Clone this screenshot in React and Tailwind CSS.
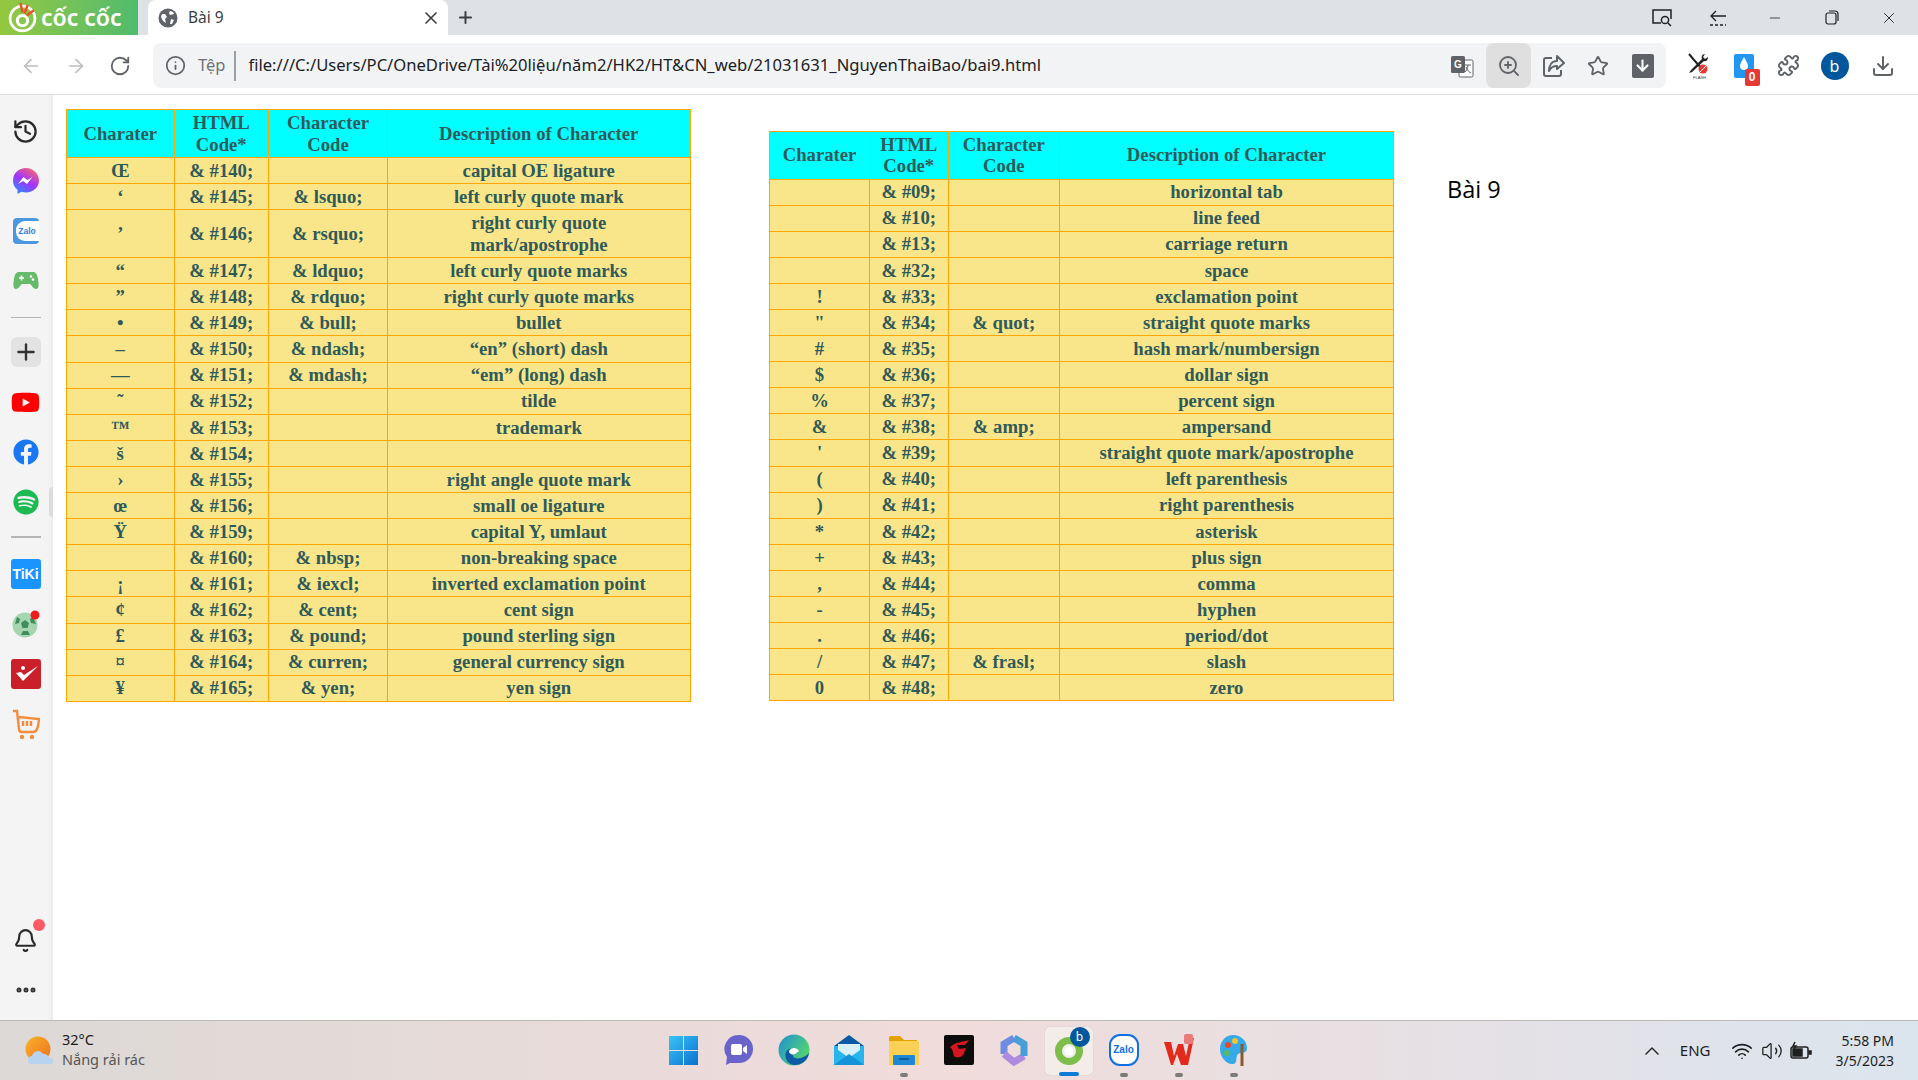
import React from "react";
import {
  ArrowLeft,
  ArrowRight,
  RotateCw,
  Info,
  X,
  Plus,
  ZoomIn,
  Star,
  ArrowDown,
  Download,
  Puzzle,
  History,
  Bell,
  Ellipsis,
  ChevronUp,
  Wifi,
  Volume2,
  Minus,
} from "lucide-react";
import { FaYoutube, FaFacebook, FaSpotify } from "react-icons/fa";

const leftRows = [
  ["Œ", "& #140;", "", "capital OE ligature"],
  ["‘", "& #145;", "& lsquo;", "left curly quote mark"],
  ["’", "& #146;", "& rsquo;", "right curly quote mark/apostrophe", true],
  ["“", "& #147;", "& ldquo;", "left curly quote marks"],
  ["”", "& #148;", "& rdquo;", "right curly quote marks"],
  ["•", "& #149;", "& bull;", "bullet"],
  ["–", "& #150;", "& ndash;", "“en” (short) dash"],
  ["—", "& #151;", "& mdash;", "“em” (long) dash"],
  ["˜", "& #152;", "", "tilde"],
  ["™", "& #153;", "", "trademark"],
  ["š", "& #154;", "", ""],
  ["›", "& #155;", "", "right angle quote mark"],
  ["œ", "& #156;", "", "small oe ligature"],
  ["Ÿ", "& #159;", "", "capital Y, umlaut"],
  ["", "& #160;", "& nbsp;", "non-breaking space"],
  ["¡", "& #161;", "& iexcl;", "inverted exclamation point"],
  ["¢", "& #162;", "& cent;", "cent sign"],
  ["£", "& #163;", "& pound;", "pound sterling sign"],
  ["¤", "& #164;", "& curren;", "general currency sign"],
  ["¥", "& #165;", "& yen;", "yen sign"],
];

const rightRows = [
  ["", "& #09;", "", "horizontal tab"],
  ["", "& #10;", "", "line feed"],
  ["", "& #13;", "", "carriage return"],
  ["", "& #32;", "", "space"],
  ["!", "& #33;", "", "exclamation point"],
  ['"', "& #34;", "& quot;", "straight quote marks"],
  ["#", "& #35;", "", "hash mark/numbersign"],
  ["$", "& #36;", "", "dollar sign"],
  ["%", "& #37;", "", "percent sign"],
  ["&", "& #38;", "& amp;", "ampersand"],
  ["'", "& #39;", "", "straight quote mark/apostrophe"],
  ["(", "& #40;", "", "left parenthesis"],
  [")", "& #41;", "", "right parenthesis"],
  ["*", "& #42;", "", "asterisk"],
  ["+", "& #43;", "", "plus sign"],
  [",", "& #44;", "", "comma"],
  ["-", "& #45;", "", "hyphen"],
  [".", "& #46;", "", "period/dot"],
  ["/", "& #47;", "& frasl;", "slash"],
  ["0", "& #48;", "", "zero"],
];

const CharTable = ({ rows, widths, className }) => {
  const cell = "border border-[#ffa500] p-0 text-center align-middle";
  return (
    <table
      className={`table-fixed border-collapse font-['Liberation_Serif',serif] text-[18.7px] font-bold leading-[21.5px] text-[#2f5a5a] ${className}`}
    >
      <colgroup>
        {widths.map((w) => (
          <col key={w} className={w} />
        ))}
      </colgroup>
      <thead>
        <tr className="h-[48px] bg-[#00ffff]">
          <th className={cell}>Charater</th>
          <th className={cell}>HTML Code*</th>
          <th className={cell}>Character Code</th>
          <th className={cell}>Description of Character</th>
        </tr>
      </thead>
      <tbody className="bg-[#f9e68a]">
        {rows.map((r) => (
          <tr key={r[1]} className={r[4] ? "h-[48px]" : "h-[26.1px]"}>
            <td className={cell}>{r[0]}</td>
            <td className={cell}>{r[1]}</td>
            <td className={cell}>{r[2]}</td>
            <td className={`${cell} px-6`}>{r[3]}</td>
          </tr>
        ))}
      </tbody>
    </table>
  );
};

const CocCocMark = ({ size = 30, stroke = "#fff", hole = "none" }) => (
  <svg width={size} height={size} viewBox="0 0 30 30">
    <circle cx="15" cy="16" r="12" fill="none" stroke={stroke} strokeWidth="2.6" />
    <circle cx="15" cy="18" r="5" fill={hole} stroke={stroke} strokeWidth="3" />
    <path d="M13 1l2 9M20 3l-3 8M26 8l-7 5" stroke="#f04e23" strokeWidth="2.4" />
  </svg>
);

const ToolSlot = ({ children, className = "" }) => (
  <div className={`flex h-[45px] w-[45px] shrink-0 items-center justify-center ${className}`}>
    {children}
  </div>
);

const TabBar = () => (
  <div className="flex h-[35px] shrink-0 items-stretch bg-[#dee1e6]">
    <div className="flex w-[138px] items-center gap-[3px] bg-gradient-to-r from-[#93c83e] to-[#4fbb6c] pl-[7px] font-['Noto_Sans',sans-serif] text-[23px] font-semibold text-white">
      <CocCocMark size={31} />
      <span className="whitespace-nowrap leading-none">cốc cốc</span>
    </div>
    <div className="ml-[10px] flex w-[300px] items-center rounded-t-lg bg-white pl-[10px] pr-[7px]">
      <svg width="20" height="20" viewBox="0 0 20 20">
        <circle cx="10" cy="10" r="9.5" fill="#5f6368" />
        <path d="M4 6l3 0 2 3-2 2 1 4-3-2-2-4zM12 3l3 1 1 2-4 1-1-2zM13 11l3 1-2 4-2 0z" fill="#fff" />
      </svg>
      <span className="ml-[10px] flex-1 font-['Noto_Sans',sans-serif] text-[15.5px] text-[#3c4043]">Bài 9</span>
      <X size={20} strokeWidth={2} className="text-[#3c4043]" />
    </div>
    <div className="flex w-[34px] items-center justify-center">
      <Plus size={19} strokeWidth={2.5} className="text-[#3c4043]" />
    </div>
    <div className="flex-1" />
    <div className="flex text-[#202124]">
      <div className="flex w-[57px] items-center justify-center">
        <svg width="22" height="20" viewBox="0 0 22 20" fill="none" stroke="currentColor" strokeWidth="1.5">
          <path d="M10 15H2V2h18v9" />
          <circle cx="14" cy="12" r="3.6" />
          <path d="M17 15l3 3" />
        </svg>
      </div>
      <div className="-ml-[1px] flex w-[57px] items-center justify-center">
        <svg width="20" height="20" viewBox="0 0 20 20" fill="none" stroke="currentColor" strokeWidth="1.3">
          <path d="M8 3L3 8l5 5M3 8h15" />
          <path d="M2 17h16" strokeDasharray="3 2" />
        </svg>
      </div>
      <div className="flex w-[57px] items-center justify-center">
        <Minus size={16} strokeWidth={1.2} />
      </div>
      <div className="flex w-[57px] items-center justify-center">
        <svg width="14" height="15" viewBox="0 0 14 15" fill="none" stroke="currentColor" strokeWidth="1.2">
          <rect x="1" y="3" width="10" height="11" rx="2" />
          <path d="M4 1h6a3 3 0 0 1 3 3v7" />
        </svg>
      </div>
      <div className="flex w-[58px] items-center justify-center">
        <X size={18} strokeWidth={1.2} />
      </div>
    </div>
  </div>
);

const Toolbar = () => (
  <div className="flex h-[60px] shrink-0 items-start border-b border-[#dfdfdf] bg-white pl-[8px] pt-[8px]">
    <ToolSlot><ArrowLeft size={22} strokeWidth={1.8} className="text-[#bdbdbd]" /></ToolSlot>
    <ToolSlot><ArrowRight size={22} strokeWidth={1.8} className="text-[#bdbdbd]" /></ToolSlot>
    <ToolSlot className="-ml-[1px]"><RotateCw size={22} strokeWidth={2} className="text-[#5f6368]" /></ToolSlot>
    <div className="ml-[11px] flex h-[45px] w-[1513px] items-center rounded-lg bg-[#f1f3f4] pl-[12px]">
      <Info size={21} strokeWidth={2} className="text-[#5f6368]" />
      <span className="ml-[12px] font-['Noto_Sans',sans-serif] text-[16.5px] text-[#6f7276]">Tệp</span>
      <span className="ml-[9px] h-[30px] w-[2px] bg-[#9aa0a6]" />
      <span className="ml-[12px] flex-1 whitespace-nowrap font-['Noto_Sans',sans-serif] text-[16.6px] text-[#202124]">
        file:///C:/Users/PC/OneDrive/Tài%20liệu/năm2/HK2/HT&amp;CN_web/21031631_NguyenThaiBao/bai9.html
      </span>
      <ToolSlot className="-translate-x-[2px]">
        <svg width="24" height="24" viewBox="0 0 24 24">
          <rect x="9" y="6" width="14" height="17" rx="1.5" fill="#fff" stroke="#5f6368" />
          <rect x="1" y="2" width="14" height="17" rx="1.5" fill="#5f6368" />
          <text x="4" y="14" fontSize="10" fontWeight="700" fill="#fff" fontFamily="Liberation Sans">G</text>
          <path d="M15 11h6M18 11c0 4-2 6-3 7M16 13c1 3 3 5 5 6" stroke="#5f6368" fill="none" />
        </svg>
      </ToolSlot>
      <ToolSlot className="rounded-lg bg-[#dfdfdf]"><ZoomIn size={24} strokeWidth={1.8} className="text-[#5f6368]" /></ToolSlot>
      <ToolSlot>
        <svg width="24" height="24" viewBox="0 0 24 24" fill="none" stroke="#5f6368" strokeWidth="2">
          <path d="M10 4H4a2 2 0 0 0-2 2v14a2 2 0 0 0 2 2h13a2 2 0 0 0 2-2v-4" />
          <path d="M15 2l7 7-7 6v-3c-4 0-6 1-8 5 0-6 3-10 8-10z" strokeLinejoin="round" />
        </svg>
      </ToolSlot>
      <ToolSlot className="-translate-x-[1px]"><Star size={22} strokeWidth={2} className="text-[#5f6368]" /></ToolSlot>
      <ToolSlot className="-translate-x-[1px]">
        <span className="flex h-[24px] w-[22px] items-center justify-center rounded-[2px] bg-[#5f6368]">
          <ArrowDown size={17} strokeWidth={3} className="text-white" />
        </span>
      </ToolSlot>
    </div>
    <ToolSlot className="ml-[9px]">
      <svg width="24" height="28" viewBox="0 0 24 28" fill="none">
        <path d="M3 2l5 6M8 8l9 10" stroke="#222" strokeWidth="2" />
        <path d="M19 2c-3 0-4 3-3 5L5 18l-2 3 3-1L18 9c3 1 4-2 4-4l-3 2-2-2z" fill="#222" />
        <circle cx="17" cy="17" r="4.5" fill="#e53935" />
        <path d="M14 20l6-6" stroke="#fff" />
        <text x="7" y="27" fontSize="4" fill="#333" fontFamily="Liberation Sans">FLASH</text>
      </svg>
    </ToolSlot>
    <ToolSlot className="translate-x-[1px]">
      <span className="relative flex h-[24px] w-[20px] items-start justify-center rounded-[2px] bg-[#2196f3]">
        <svg width="10" height="14" viewBox="0 0 10 14" className="mt-[3px]">
          <path d="M5 0c2 4 4 6 4 9a4 4 0 0 1-8 0c0-3 2-5 4-9z" fill="#fff" />
        </svg>
        <span className="absolute left-[11px] top-[15px] flex h-[17px] w-[15px] items-center justify-center rounded-[2px] bg-[#e53935] font-['Liberation_Sans',sans-serif] text-[12px] font-bold text-white">
          0
        </span>
      </span>
    </ToolSlot>
    <ToolSlot className="translate-x-[1px]"><Puzzle size={23} strokeWidth={2} className="text-[#5f6368]" /></ToolSlot>
    <ToolSlot className="ml-[2px]">
      <span className="flex h-[28px] w-[28px] items-center justify-center rounded-full bg-[#01579b] font-['Noto_Sans',sans-serif] text-[16px] text-white">
        b
      </span>
    </ToolSlot>
    <ToolSlot className="ml-[3px]"><Download size={24} strokeWidth={2} className="text-[#5f6368]" /></ToolSlot>
  </div>
);

const SideSlot = ({ children, className = "" }) => (
  <div className={`flex h-[50px] w-full items-center justify-center ${className}`}>{children}</div>
);

const Sidebar = () => (
  <aside className="relative flex w-[53px] shrink-0 flex-col items-center bg-[#f4f4f4] pr-[2px] pt-[11px] shadow-[inset_-4px_0_4px_-3px_#e6e6e6]">
    <SideSlot><History size={27} strokeWidth={2} className="text-[#2b2b2b]" /></SideSlot>
    <SideSlot>
      <svg width="26" height="26" viewBox="0 0 26 26">
        <defs>
          <linearGradient id="msgr" x1="0.2" y1="1" x2="0.8" y2="0">
            <stop offset="0" stopColor="#2f8cff" />
            <stop offset="0.5" stopColor="#a033ff" />
            <stop offset="1" stopColor="#ff6968" />
          </linearGradient>
        </defs>
        <path d="M13 0C6 0 0 5 0 12.500c0 4 1.600 7 4.500 9.200V26l4-2.200c1.400.4 3 .6 4.500.6 7 0 13-5 13-11.900S20 0 13 0z" fill="url(#msgr)" />
        <path d="M5 16l5.500-7 4 3 5-3-5.500 7-4-3z" fill="#fff" />
      </svg>
    </SideSlot>
    <SideSlot>
      <span className="flex h-[26px] w-[26px] items-center justify-end rounded-[4px] bg-[#4a98e0]">
        <span className="flex h-[20px] w-[23px] items-center justify-center rounded-l-[9px] bg-white font-['Liberation_Sans',sans-serif] text-[8.5px] font-bold text-[#2f7fd8]">
          Zalo
        </span>
      </span>
    </SideSlot>
    <SideSlot>
      <svg width="26" height="18" viewBox="0 0 26 18">
        <path d="M6 0h14c3 0 4 2 5 7 1 6 1 10-2 10-3 0-4-4-6-5H9c-2 1-3 5-6 5-3 0-3-4-2-10C2 2 3 0 6 0z" fill="#66bb6a" />
        <path d="M6 6h5M8.500 3.500v5" stroke="#fff" strokeWidth="1.500" />
        <circle cx="18" cy="4.500" r="1.300" fill="#fff" />
        <circle cx="20" cy="7.500" r="1.300" fill="#fff" />
      </svg>
    </SideSlot>
    <div className="my-[11px] h-px w-[30px] bg-[#b5b5b5]" />
    <SideSlot className="-mt-[2px]">
      <span className="flex h-[30px] w-[30px] items-center justify-center rounded-md bg-[#e3e3e3]">
        <Plus size={26} strokeWidth={2.2} className="text-[#333]" />
      </span>
    </SideSlot>
    <SideSlot><FaYoutube size={29} className="text-[#f00]" /></SideSlot>
    <SideSlot><FaFacebook size={26} className="text-[#1877f2]" /></SideSlot>
    <SideSlot><FaSpotify size={26} className="text-[#1db954]" /></SideSlot>
    <div className="my-[9px] h-[2px] w-[30px] bg-[#b5b5b5]" />
    <SideSlot className="mt-[2px]">
      <span className="flex h-[30px] w-[30px] items-center justify-center rounded-[3px] bg-[#1a94ff] font-['Liberation_Sans',sans-serif] text-[14px] font-bold text-white">
        TiKi
      </span>
    </SideSlot>
    <SideSlot>
      <svg width="28" height="28" viewBox="0 0 28 28">
        <circle cx="13" cy="15" r="12.500" fill="#a5d6b0" />
        <path d="M13 10l4 3-1.500 5h-5L9 13z" fill="#3f8f5a" />
        <path d="M5 7l3 2-1 4-4 1zM21 7l-3 2 1 4 5 1zM9 25l2-4h5l2 4z" fill="#3f8f5a" />
        <circle cx="23" cy="5" r="4.500" fill="#f01c1c" />
      </svg>
    </SideSlot>
    <SideSlot>
      <span className="flex h-[30px] w-[30px] items-center justify-center rounded-[3px] bg-[#c9202a]">
        <svg width="26" height="22" viewBox="0 0 26 22" fill="none">
          <path d="M3 10l7 8L25 3 11 12 8 9z" fill="#fff" />
          <circle cx="10" cy="5" r="2" fill="#fff" />
        </svg>
      </span>
    </SideSlot>
    <SideSlot>
      <svg width="28" height="30" viewBox="0 0 28 30" fill="none" stroke="#f58b3c" strokeWidth="2.4">
        <path d="M1 2h4l2 18c0 2 1 3 3 3h11c3 0 5-2 6-13L7 8" />
        <path d="M11 17v-5M15 17v-5M19 17v-5" />
        <circle cx="10" cy="28" r="1" fill="#f58b3c" />
        <circle cx="20" cy="28" r="1" fill="#f58b3c" />
      </svg>
    </SideSlot>
    <div className="flex-1" />
    <SideSlot className="relative">
      <Bell size={25} strokeWidth={2} className="text-[#2b2b2b]" />
      <span className="absolute left-[33px] top-[4px] h-[12px] w-[12px] rounded-full bg-[#ff5a65]" />
    </SideSlot>
    <SideSlot className="mb-[5px]"><Ellipsis size={24} strokeWidth={3} className="text-[#333]" /></SideSlot>
    <span className="absolute left-[49px] top-[392px] h-[30px] w-[4px] rounded-l-sm bg-[#dcdcdc]" />
  </aside>
);

const TaskSlot = ({ children, dot, active }) => (
  <div className="relative flex h-[60px] w-[55px] shrink-0 items-center justify-center">
    {active && <span className="absolute left-[4px] top-[6px] h-[48px] w-[48px] rounded-[5px] bg-[#f3ece8] shadow-[0_0_1px_#bbb]" />}
    <span className="relative flex -translate-y-[1px] items-center justify-center">{children}</span>
    {dot && <span className="absolute left-[24px] top-[52px] h-[4px] w-[8px] rounded-full bg-[#7b7b7b]" />}
    {active && <span className="absolute left-[18px] top-[51px] h-[4px] w-[20px] rounded-full bg-[#0a7cd6]" />}
  </div>
);

const Taskbar = () => (
  <footer className="flex h-[60px] shrink-0 items-center border-t border-[#bdb9b6] bg-gradient-to-r from-[#dcd9d6] via-[#f0dcdb] to-[#dbe5ee]">
    <div className="flex w-[656px] shrink-0 items-center pl-[25px] font-['Noto_Sans',sans-serif]">
      <svg width="30" height="30" viewBox="0 0 30 30">
        <defs>
          <linearGradient id="sun" x1="0" y1="0" x2="1" y2="1">
            <stop offset="0" stopColor="#f8b42a" />
            <stop offset="1" stopColor="#ee6f1f" />
          </linearGradient>
        </defs>
        <circle cx="13" cy="13" r="12.500" fill="url(#sun)" />
        <path d="M7 28a4 4 0 0 1 0-8 6 6 0 0 1 11-2 5 5 0 0 1 6 4 3 3 0 0 1 2 6z" fill="#b7d3f0" />
      </svg>
      <div className="ml-[7px] -mt-[3px] flex flex-col text-[14.5px] leading-[20px]">
        <span className="text-[#1c1c1c]">32°C</span>
        <span className="text-[#555]">Nắng rải rác</span>
      </div>
    </div>
    <TaskSlot>
      <svg width="30" height="30" viewBox="0 0 30 30">
        <defs>
          <linearGradient id="win" x1="0" y1="0" x2="1" y2="1">
            <stop offset="0" stopColor="#39c4f7" />
            <stop offset="1" stopColor="#0a6fd0" />
          </linearGradient>
        </defs>
        <path d="M0 1h14v14H0zM15 1h14v14H15zM0 16h14v14H0zM15 16h14v14H15z" fill="url(#win)" />
      </svg>
    </TaskSlot>
    <TaskSlot>
      <svg width="30" height="32" viewBox="0 0 30 32">
        <path d="M15 1a14 14 0 0 1 0 28H6l-4 2 1-8A14 14 0 0 1 15 1z" fill="#6a63c9" />
        <rect x="7" y="10" width="11" height="11" rx="2" fill="#fff" />
        <path d="M19 14l4-3v9l-4-3z" fill="#fff" />
      </svg>
    </TaskSlot>
    <TaskSlot>
      <svg width="32" height="32" viewBox="0 0 32 32">
        <defs>
          <linearGradient id="edge" x1="0" y1="0" x2="1" y2="0.6">
            <stop offset="0" stopColor="#1f8fd8" />
            <stop offset="1" stopColor="#55d66b" />
          </linearGradient>
        </defs>
        <circle cx="16" cy="16" r="15.500" fill="url(#edge)" />
        <path d="M31 19c-1 8-8 12-14 12C9 31 6 23 8 18c2-4 9-5 11-1-3 0-5 2-4 5 1 4 11 3 16-3z" fill="#0c59a4" />
        <path d="M21 17c-2-4-8-4-10 0 0 3 3 4 6 3z" fill="#fff" />
      </svg>
    </TaskSlot>
    <TaskSlot>
      <svg width="32" height="32" viewBox="0 0 32 32">
        <path d="M1 12L16 1l15 11v19H1z" fill="#0c59a4" />
        <path d="M1 12h30v19H1z" fill="#28b4ee" />
        <path d="M5 10h22v6L16 24 5 16z" fill="#d9f0fb" />
        <path d="M1 31l15-11 15 11z" fill="#1593d8" />
      </svg>
    </TaskSlot>
    <TaskSlot dot>
      <svg width="32" height="30" viewBox="0 0 32 30">
        <path d="M1 3a2 2 0 0 1 2-2h9l4 4h13v6H1z" fill="#e2a300" />
        <path d="M1 6h30v24H1z" fill="#fbd155" />
        <rect x="5" y="20" width="22" height="10" rx="1" fill="#1e88d4" />
        <path d="M11 24h10" stroke="#0b4f8c" strokeWidth="1.500" />
      </svg>
    </TaskSlot>
    <TaskSlot>
      <svg width="30" height="30" viewBox="0 0 30 30">
        <rect width="30" height="30" rx="2" fill="#0d0d0d" />
        <path d="M6 12c6-5 12-5 19-7l-4 5h-8l2 4 7-1-2 5c-1 4-7 6-10 3l-2-7z" fill="#d5161e" />
      </svg>
    </TaskSlot>
    <TaskSlot>
      <svg width="28" height="32" viewBox="0 0 28 32" fill="none" strokeWidth="7">
        <path d="M14 4L4 10v10" stroke="#6d8ce0" />
        <path d="M4 20l10 8 10-6" stroke="#ae8be0" />
        <path d="M24 22V10L14 4" stroke="#4a9ed8" />
      </svg>
    </TaskSlot>
    <TaskSlot active>
      <svg width="30" height="30" viewBox="0 0 30 30" fill="none">
        <circle cx="15" cy="16" r="10.500" stroke="#7dbe4b" strokeWidth="7" />
        <circle cx="15" cy="16" r="4.500" fill="#fff" />
      </svg>
      <span className="absolute -right-[6px] -top-[8px] flex h-[20px] w-[20px] items-center justify-center rounded-full bg-[#01579b] font-['Noto_Sans',sans-serif] text-[12px] text-white">
        b
      </span>
    </TaskSlot>
    <TaskSlot dot>
      <span className="flex h-[32px] w-[30px] items-center justify-center rounded-[11px] border-2 border-[#0f6fe6] bg-white font-['Liberation_Sans',sans-serif] text-[10px] font-bold text-[#0f6fe6]">
        Zalo
      </span>
    </TaskSlot>
    <TaskSlot dot>
      <svg width="32" height="32" viewBox="0 0 32 32">
        <path d="M1 8h7l3 14 4-12h5l3 12 4-18h4l-6 27h-7l-4-11-4 11H8z" fill="#e42a1c" />
        <rect x="21" y="0" width="9" height="10" rx="2" fill="#e87a7a" />
      </svg>
    </TaskSlot>
    <TaskSlot dot>
      <svg width="30" height="34" viewBox="0 0 30 34">
        <path d="M14 2c8 0 14 6 14 13 0 6-6 4-9 6-3 3 0 8-4 10C7 32 1 24 1 16 1 8 7 2 14 2z" fill="#36a9e8" />
        <circle cx="9" cy="12" r="3" fill="#e8442e" />
        <circle cx="16" cy="8" r="3" fill="#f4c430" />
        <circle cx="8" cy="20" r="3" fill="#5cb85c" />
        <path d="M23 11v22" stroke="#8a5a2b" strokeWidth="3" />
      </svg>
    </TaskSlot>
    <div className="ml-auto flex items-center pr-[24px] text-[#1f1f1f]">
      <ChevronUp size={24} strokeWidth={1.4} />
      <span className="ml-[16px] font-['Noto_Sans',sans-serif] text-[15px]">ENG</span>
      <Wifi size={22} strokeWidth={1.8} className="ml-[20px]" />
      <Volume2 size={22} strokeWidth={1.4} className="ml-[8px]" />
      <svg width="22" height="20" viewBox="0 0 22 20" className="ml-[7px]" fill="none" stroke="currentColor" strokeWidth="1.500">
        <rect x="1" y="6" width="17" height="11" rx="2" />
        <path d="M3 8h9v7H3z" fill="currentColor" />
        <path d="M19 10h2v3h-2z" fill="currentColor" />
        <path d="M5 1L3 5h3L4 8" />
      </svg>
      <div className="ml-[24px] flex flex-col items-end font-['Noto_Sans',sans-serif] text-[14px] leading-[20px]">
        <span>5:58 PM</span>
        <span>3/5/2023</span>
      </div>
    </div>
  </footer>
);

export default function App() {
  return (
    <div className="flex h-screen w-full flex-col overflow-hidden bg-white">
      <TabBar />
      <Toolbar />
      <div className="flex min-h-0 flex-1">
        <Sidebar />
        <main className="flex flex-1 items-start pl-[13px] pt-[14px]">
          <CharTable
            rows={leftRows}
            widths={["w-[107.5px]", "w-[94.5px]", "w-[119px]", "w-[302.5px]"]}
            className="w-[623.5px]"
          />
          <CharTable
            rows={rightRows}
            widths={["w-[100px]", "w-[78.5px]", "w-[111.5px]", "w-[334px]"]}
            className="ml-[78.5px] mt-[21.5px] w-[624px]"
          />
          <p className="ml-[53px] mt-[64.5px] font-['Open_Sans',sans-serif] text-[23.5px] leading-[30px] text-black">
            Bài 9
          </p>
        </main>
      </div>
      <Taskbar />
    </div>
  );
}
